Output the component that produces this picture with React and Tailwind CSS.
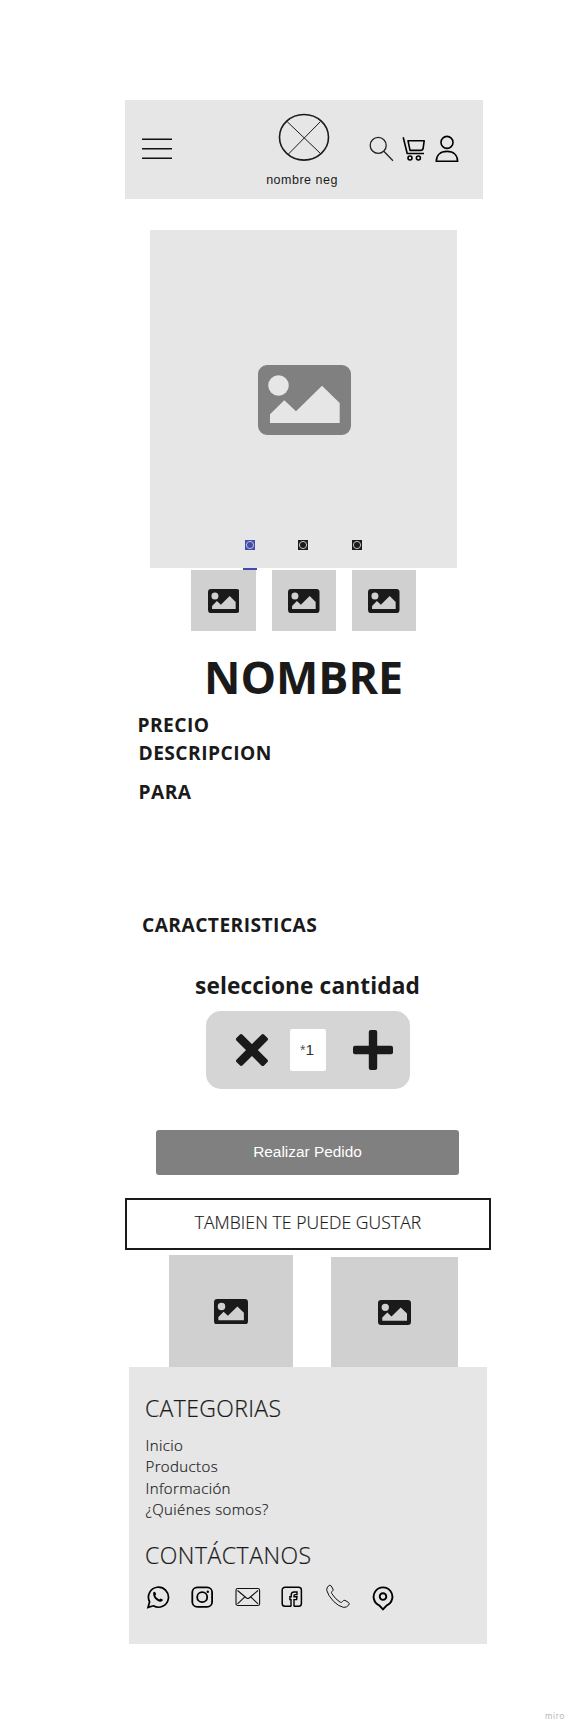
const openSans = "font-['Open_Sans','Noto_Sans',sans-serif]";

function ImageIcon({ className }) {
  return (
    <svg viewBox="0 0 93 70" preserveAspectRatio="none" className={className} fill="currentColor">
      <path
        fillRule="evenodd"
        d="M9 0H84A9 9 0 0 1 93 9V61A9 9 0 0 1 84 70H9A9 9 0 0 1 0 61V9A9 9 0 0 1 9 0ZM20.5 10.2A10.3 10.3 0 1 0 20.5 30.8A10.3 10.3 0 1 0 20.5 10.2ZM12 49.3V58H81.7V38L64 20.7L38 46.3L26.3 35.3Z"
      />
    </svg>
  );
}

function RadioDot({ className }) {
  return (
    <svg viewBox="0 0 10 10" className={className}>
      <rect width="10" height="10" fill="currentColor" />
      <circle cx="5" cy="5" r="3.6" fill="none" stroke="#c4c4c4" strokeWidth="1" />
    </svg>
  );
}

function Header() {
  return (
    <header className="mt-[100px] ml-[125px] flex h-[99px] w-[358px] shrink-0 bg-[#e6e6e6]">
      <svg viewBox="0 0 30 22" className="mt-[38px] ml-[17px] h-[22px] w-[30px]" stroke="#111" strokeWidth="1.4">
        <path d="M0 1.2H30M0 10.8H30M0 20.2H30" />
      </svg>
      <div className="ml-[84px] flex w-[92px] flex-col items-center">
        <svg viewBox="0 0 52 48" className="mt-[13px] ml-[3px] h-[48px] w-[52px]" fill="none" stroke="#1a1a1a">
          <ellipse cx="26" cy="24.3" rx="24.5" ry="22.8" strokeWidth="1.6" />
          <path d="M9 8.5L42.5 40.5M42.5 8.5L10.5 41" strokeWidth="1" />
        </svg>
        <span className="mt-[11px] text-[12.5px] leading-4 tracking-[0.5px] whitespace-nowrap text-[#1a1a1a] font-['Liberation_Sans',sans-serif]">
          nombre neg
        </span>
      </div>
      <svg viewBox="0 0 26 26" className="mt-[36px] ml-[20px] h-[26px] w-[26px]" fill="none" stroke="#222" strokeWidth="1.3">
        <circle cx="10.2" cy="9.4" r="8" />
        <path d="M15.8 15.2L25 24.7" />
      </svg>
      <svg viewBox="0 0 24 26" className="mt-[36px] ml-[8px] h-[26px] w-[24px]" fill="none" stroke="#000" strokeWidth="1.6" strokeLinejoin="round">
        <path d="M1.2 1.2L5.2 17.5H22" />
        <path d="M6 4.7H22.2L21.2 11.8Q20.9 14.4 18.6 14.4H8Z" />
        <circle cx="8" cy="22" r="2" />
        <circle cx="16.4" cy="22" r="2" />
      </svg>
      <svg viewBox="0 0 24 27" className="mt-[35px] ml-[9px] h-[27px] w-[24px]" fill="none" stroke="#000" strokeWidth="1.6">
        <circle cx="12" cy="7.4" r="6" />
        <path d="M1.3 26.2C1.3 20 5.6 16.4 12 16.4S22.6 20 22.6 26.2Z" />
      </svg>
    </header>
  );
}

function Gallery() {
  return (
    <section className="shrink-0">
      <div className="mt-[31px] ml-[150px] flex h-[338px] w-[307px] flex-col items-center bg-[#e6e6e6]">
        <ImageIcon className="mt-[135px] ml-[2px] h-[70px] w-[93px] text-[#808080]" />
        <div className="mt-[104.5px] mr-[1px] flex gap-[43.5px] text-[#1a1a1a]">
          <RadioDot className="h-[10px] w-[10px] text-[#414bb2]" />
          <RadioDot className="h-[10px] w-[10px]" />
          <RadioDot className="h-[10px] w-[10px]" />
        </div>
      </div>
      <div className="ml-[243px] h-[2px] w-[13.5px] bg-[#414bb2]" />
      <div className="ml-[191px] flex gap-4 text-[#1a1a1a]">
        <div className="flex h-[61px] w-[65px] items-center justify-center bg-[#d0d0d0]">
          <ImageIcon className="h-[24px] w-[31.5px]" />
        </div>
        {[1, 2].map((i) => (
          <div key={i} className="flex h-[61px] w-[64px] items-center justify-center bg-[#d0d0d0]">
            <ImageIcon className="h-[24px] w-[31.5px]" />
          </div>
        ))}
      </div>
    </section>
  );
}

function Quantity() {
  return (
    <div className="mt-[9px] ml-[206px] flex h-[78px] w-[204px] shrink-0 items-center rounded-[15px] bg-[#d5d5d5]">
      <svg viewBox="0 0 40 40" className="ml-[26px] h-[40px] w-[40px] rotate-45" fill="#1a1a1a">
        <rect x="0.5" y="15.9" width="39" height="8.4" rx="2" />
        <rect x="15.8" y="0.5" width="8.4" height="39" rx="2" />
      </svg>
      <div className="ml-[18px] flex h-[42px] w-[36px] items-center justify-center rounded-[2px] bg-white pr-[2px] text-[15.5px] text-[#333] font-['Liberation_Sans',sans-serif]">
        <span className="text-[14px] text-[#555]">*</span>
        <span>1</span>
      </div>
      <svg viewBox="0 0 40 40" className="ml-[27px] h-[40px] w-[40px]" fill="#1a1a1a">
        <rect x="0" y="15.8" width="40" height="8.4" rx="2" />
        <rect x="15.8" y="0" width="8.4" height="40" rx="2" />
      </svg>
    </div>
  );
}

function ContactIcons() {
  return (
    <div className="mt-[13px] flex h-[28px] items-start">
      <svg viewBox="0 0 24 24" className="mt-[1px] ml-[-0.5px] h-[24px] w-[24px]" fill="none" stroke="#000" strokeWidth="1.7">
        <path d="M2 22.4L3.6 16.8A10 10 0 1 1 7.4 20.8Z" />
        <path d="M7.2 7.6C8 6.3 9 6.4 9.4 7.4L10.2 9.2L9.3 10.6C10 12.3 11.4 13.6 13.2 14.4L14.5 13.4L16.8 14.6C17 16.2 15.2 17 13.8 16.7C10 15.8 6.6 12.2 7.2 7.6Z" fill="#000" stroke="none" />
      </svg>
      <svg viewBox="0 0 24 24" className="mt-[1px] ml-[20.5px] h-[24px] w-[24px]" fill="none" stroke="#000" strokeWidth="1.8">
        <rect x="2.3" y="2.3" width="19.8" height="19.6" rx="5" />
        <circle cx="12.2" cy="12.2" r="5" />
        <circle cx="17.8" cy="6.7" r="1.2" fill="#000" stroke="none" />
      </svg>
      <svg viewBox="0 0 26 20" className="mt-[3px] ml-[20.5px] h-[20px] w-[26px]" fill="none" stroke="#111" strokeWidth="1.1">
        <rect x="1" y="1.5" width="23.6" height="17" rx="1.8" />
        <path d="M2.5 3.5L11.5 11Q12.8 12 14.1 11L23 3.5M2.5 16.8L9.6 10.2M23 16.8L16 10.2" />
      </svg>
      <svg viewBox="0 0 22 22" className="mt-[2px] ml-[20.5px] h-[22px] w-[22px]" fill="none" stroke="#000" strokeWidth="1.5">
        <path d="M10 20.3H4A2.8 2.8 0 0 1 1.2 17.5V4A2.8 2.8 0 0 1 4 1.2H17.6A2.8 2.8 0 0 1 20.4 4V17.5A2.8 2.8 0 0 1 17.6 20.3H13" />
        <path d="M10 20.5V13.6H8.9V10.8H10.2V9Q10.2 6 13 6H16V8.6H14Q13 8.6 13 9.8V10.8H16L15.6 13.6H13V20.5" strokeWidth="1.4" />
      </svg>
      <svg viewBox="0 0 24 24" className="mt-[0.5px] ml-[22.5px] h-[24px] w-[24px]" fill="none" stroke="#111" strokeWidth="1">
        <path d="M2.2 2.2Q3.8 0.6 4.9 1.6L7 5Q7.6 6.4 6 7.4Q5 8.4 5.8 9.6Q9.4 15.3 14.2 18.2Q15.6 18.8 16.4 17.6Q17.6 15.8 19 16.3L22.6 18.6Q24 19.6 22.6 21.2Q20.6 23.6 17.6 23.4Q12.6 22.4 7.6 17.4Q1.8 11 0.8 6.6Q0.4 4 2.2 2.2Z" />
      </svg>
      <svg viewBox="0 0 22 25" className="mt-[2px] ml-[22px] h-[25px] w-[22px]" fill="none" stroke="#000" strokeWidth="1.9">
        <path d="M7.2 19.4A9.4 9.4 0 1 1 14.8 19.4L11 23.4Z" />
        <circle cx="11" cy="10.6" r="3.3" />
      </svg>
    </div>
  );
}

function Footer() {
  return (
    <footer className="ml-[129px] flex h-[277px] w-[358px] shrink-0 flex-col items-start bg-[#e6e6e6] pt-[25px] pl-[17px] font-light text-[#1a1a1a] [-webkit-text-stroke:0.2px_#1a1a1a]">
      <h2 className="ml-[-1px] text-[23px] leading-8 tracking-[0.35px]">CATEGORIAS</h2>
      <ul className="mt-[11px] ml-[-0.5px] text-[15px] leading-[21.4px] tracking-[0.38px]">
        <li><span>Inicio</span></li>
        <li><span>Productos</span></li>
        <li><span>Información</span></li>
        <li><span>¿Quiénes somos?</span></li>
      </ul>
      <h2 className="mt-[18px] ml-[-1px] text-[23px] leading-8 tracking-[0.5px]">CONTÁCTANOS</h2>
      <ContactIcons />
    </footer>
  );
}

export default function App() {
  return (
    <main className={`flex h-[1732px] w-[577px] flex-col items-start overflow-hidden bg-white text-[#1a1a1a] ${openSans}`}>
      <Header />
      <Gallery />
      <h1 className="mt-[21px] ml-[204px] text-[44.8px] leading-[50px] font-bold">NOMBRE</h1>
      <h3 className="mt-[9px] ml-[137.5px] text-[19.2px] leading-7 font-bold tracking-[0.45px]">PRECIO</h3>
      <h3 className="ml-[138.5px] text-[19.2px] leading-7 font-bold tracking-[0.45px]">DESCRIPCION</h3>
      <h3 className="mt-[11px] ml-[138.5px] text-[19.2px] leading-7 font-bold tracking-[0.45px]">PARA</h3>
      <h3 className="mt-[105px] ml-[142px] text-[19.2px] leading-7 font-bold tracking-[0.45px]">CARACTERISTICAS</h3>
      <h2 className="mt-[31px] ml-[195px] text-[22.7px] leading-8 font-bold tracking-[0.1px]">seleccione cantidad</h2>
      <Quantity />
      <button className="mt-[41px] ml-[156px] h-[45px] w-[303px] shrink-0 rounded-[3px] bg-[#808080] pb-[2px] text-[15.4px] text-white font-['Liberation_Sans',sans-serif]">
        Realizar Pedido
      </button>
      <div className="mt-[23px] ml-[125px] flex h-[52px] w-[366px] shrink-0 items-center justify-center border-2 border-[#1a1a1a] pb-[4px] text-[17.5px] font-light tracking-[0.1px] [-webkit-text-stroke:0.2px_#1a1a1a]">
        <span>TAMBIEN TE PUEDE GUSTAR</span>
      </div>
      <div className="mt-[5px] ml-[169px] flex h-[112px] shrink-0 items-end gap-[38px]">
        <div className="flex h-[112px] w-[124px] justify-center bg-[#d0d0d0] pt-[43.5px]">
          <ImageIcon className="h-[25.5px] w-[34px]" />
        </div>
        <div className="flex h-[110px] w-[127px] justify-center bg-[#d0d0d0] pt-[43px]">
          <ImageIcon className="h-[25px] w-[33px]" />
        </div>
      </div>
      <Footer />
      <p className="mt-[66px] mr-[12px] self-end text-[8.5px] leading-3 tracking-[0.6px] text-[#b8b8c0] font-['Inter',sans-serif]">miro</p>
    </main>
  );
}
